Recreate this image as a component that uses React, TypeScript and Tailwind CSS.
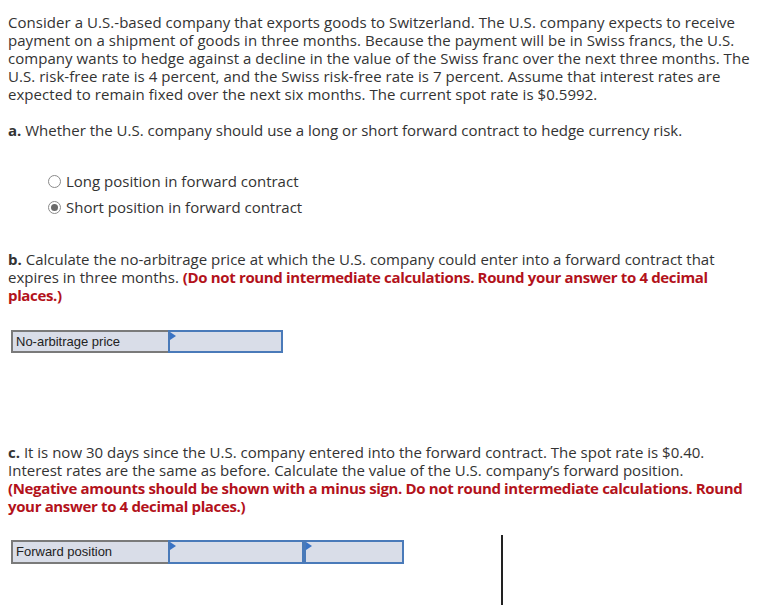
import React from "react";

const Input = ({ w }: { w: string }) => (
  <div className={`relative h-full ${w} border-2 border-[#4a7ab9] bg-[#d9dde8]`}>
    <div className="absolute left-0 top-0 h-0 w-0 border-y-[4px] border-l-[6px] border-y-transparent border-l-[#3a73c4]" />
  </div>
);

export default function App() {
  return (
    <div
      className="relative h-[605px] w-[758px] whitespace-nowrap bg-white text-[15px] leading-[18px] text-[#333]"
      style={{ fontFamily: '"Open Sans", sans-serif' }}
    >
      <div className="px-[8px] pt-[13px]">
        <p className="tracking-[0.05px]">
          Consider a U.S.-based company that exports goods to Switzerland. The U.S. company expects to receive
          <br />
          payment on a shipment of goods in three months. Because the payment will be in Swiss francs, the U.S.
          <br />
          company wants to hedge against a decline in the value of the Swiss franc over the next three months. The
          <br />
          U.S. risk-free rate is 4 percent, and the Swiss risk-free rate is 7 percent. Assume that interest rates are
          <br />
          expected to remain fixed over the next six months. The current spot rate is $0.5992.
        </p>
        <p className="mt-[18px]">
          <b>a.</b> Whether the U.S. company should use a long or short forward contract to hedge currency risk.
        </p>
        <div className="ml-[40px] mt-[33px] flex flex-col gap-[8px]">
          <label className="flex items-center gap-[5px]">
            <span className="h-[13px] w-[13px] rounded-full border border-[#8a8a8a] bg-white" />
            Long position in forward contract
          </label>
          <label className="flex items-center gap-[5px]">
            <span className="flex h-[13px] w-[13px] items-center justify-center rounded-full border border-[#8a8a8a] bg-white">
              <span className="h-[7px] w-[7px] rounded-full bg-[#6b6b6b]" />
            </span>
            Short position in forward contract
          </label>
        </div>
        <p className="mt-[34px]">
          <b>b.</b> Calculate the no-arbitrage price at which the U.S. company could enter into a forward contract that
          <br />
          expires in three months.{" "}
          <b className="tracking-[-0.35px] text-[#b3121b]">
            (Do not round intermediate calculations. Round your answer to 4 decimal
            <br />
            places.)
          </b>
        </p>
        <div
          className="ml-[3px] mt-[26px] flex h-[23px]"
          style={{ fontFamily: '"Liberation Sans", Arial, sans-serif' }}
        >
          <div className="flex h-full w-[157px] items-center border-2 border-r-0 border-[#7a7a7a] bg-[#d9dde8] pl-[3px] text-[13px] text-[#222]">
            No-arbitrage price
          </div>
          <Input w="w-[115px]" />
        </div>
        <p className="mt-[90px]">
          <b>c.</b> It is now 30 days since the U.S. company entered into the forward contract. The spot rate is $0.40.
          <br />
          Interest rates are the same as before. Calculate the value of the U.S. company’s forward position.
          <br />
          <b className="tracking-[-0.35px] text-[#b3121b]">
            (Negative amounts should be shown with a minus sign. Do not round intermediate calculations. Round
            <br />
            your answer to 4 decimal places.)
          </b>
        </p>
        <div
          className="ml-[3px] mt-[25px] flex h-[24px]"
          style={{ fontFamily: '"Liberation Sans", Arial, sans-serif' }}
        >
          <div className="flex h-full w-[157px] items-center border-2 border-r-0 border-[#7a7a7a] bg-[#d9dde8] pl-[3px] text-[13px] text-[#222]">
            Forward position
          </div>
          <Input w="w-[136px]" />
          <Input w="w-[100px]" />
        </div>
      </div>
      <div className="absolute left-[501px] top-[535px] h-[70px] w-[2px] bg-[#222]" />
    </div>
  );
}
